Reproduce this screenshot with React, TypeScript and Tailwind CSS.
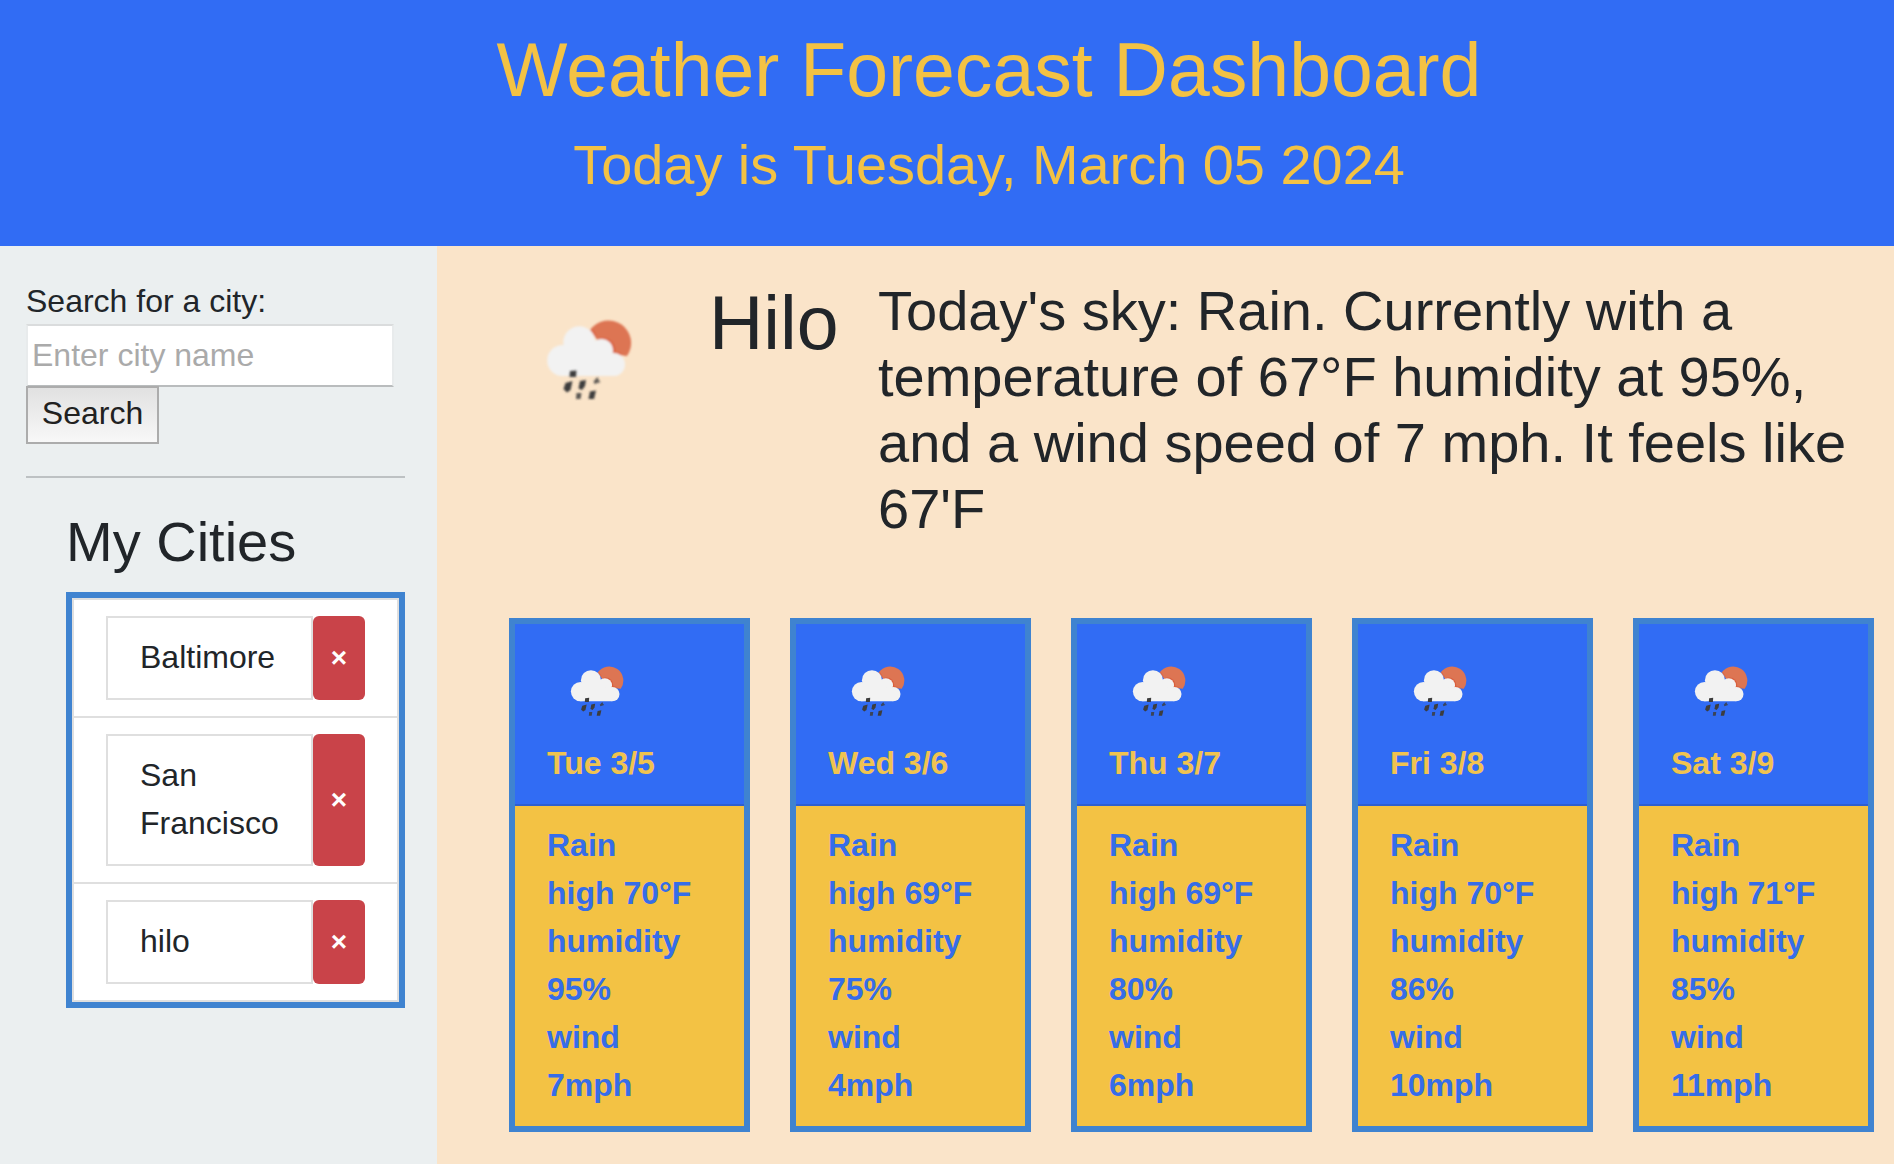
const cities = ["Baltimore", "San Francisco", "hilo"];

const forecast = [
  { day: "Tue 3/5", sky: "Rain", high: 70, humidity: 95, wind: 7 },
  { day: "Wed 3/6", sky: "Rain", high: 69, humidity: 75, wind: 4 },
  { day: "Thu 3/7", sky: "Rain", high: 69, humidity: 80, wind: 6 },
  { day: "Fri 3/8", sky: "Rain", high: 70, humidity: 86, wind: 10 },
  { day: "Sat 3/9", sky: "Rain", high: 71, humidity: 85, wind: 11 },
];

function RainIcon({ className }: { className: string }) {
  return (
    <svg viewBox="0 0 160 160" className={className} aria-label="Rain">
      <defs>
        <filter id="soft" x="-20%" y="-20%" width="140%" height="140%">
          <feGaussianBlur stdDeviation="0.8" />
        </filter>
        <filter id="softDrops" x="-20%" y="-20%" width="140%" height="140%">
          <feGaussianBlur stdDeviation="1.2" />
        </filter>
        <clipPath id="sun">
          <path d="M82 52 A22 22 0 1 1 118 77 L100 74 Z" />
        </clipPath>
      </defs>
      <g filter="url(#soft)">
        <path d="M81 52 A22 22 0 1 1 118 78 L98 76 Z" fill="#dd7453" />
        <g clipPath="url(#sun)" fill="#d8512f" opacity="0.6">
          <circle cx="72" cy="64" r="16.5" />
          <circle cx="94" cy="72" r="12" />
          <circle cx="106" cy="86" r="12" />
        </g>
        <g fill="#f2f2f2">
          <circle cx="53.7" cy="82.5" r="15.5" />
          <circle cx="70.3" cy="64.3" r="16" />
          <circle cx="92.5" cy="72.5" r="11.5" />
          <circle cx="104.5" cy="86.5" r="11.5" />
          <path d="M53 98 V70 H80 L104 80 V98 Z" />
        </g>
      </g>
      <g fill="#3c3c3c" filter="url(#softDrops)">
        <path d="M61 93 L67.500 92.500 L67 99 L60.500 99 Z" />
        <path d="M56.500 105 L63.500 103 L61.500 112 L58 114.500 L54.500 111 Z" />
        <path d="M71 103 L77 102 L76 108 L73 112 L69.500 110.500 Z" />
        <path d="M88.500 99 L90 102.500 L91.500 104 L85.500 106 L84.500 103.500 Z" opacity="0.8" />
        <path d="M67.500 115 L72.500 115 L71.500 121 L67 121 Z" opacity="0.85" />
        <path d="M81 113.500 L87 112.500 L85 121 L79.500 121 Z" />
      </g>
    </svg>
  );
}

function Header() {
  return (
    <header className="h-[246px] bg-[#316cf4] pt-6 pl-[84px] text-center text-[#f3c244]">
      <h1 className="text-[75.2px] leading-[92px]">Weather Forecast Dashboard</h1>
      <h2 className="mt-4 text-[55.9px] leading-[66px]">Today is Tuesday, March 05 2024</h2>
    </header>
  );
}

function Sidebar() {
  return (
    <aside className="w-[437px] shrink-0 bg-[#ebeff0] pt-[31px] pr-8 pl-[26px]">
      <label htmlFor="city" className="block h-[47px] leading-[48px]">Search for a city:</label>
      <input
        id="city"
        placeholder="Enter city name"
        className="block h-[63px] w-[368px] border-2 border-t-[#dadcdd] border-r-[#e8ebec] border-b-[#b9bcbd] border-l-[#e8ebec] bg-white px-1 outline-none placeholder:text-[#aaaaaa]"
      />
      <button className="-mt-px block h-[58px] w-[133px] border-2 border-[#acacac] bg-linear-to-b from-[#e1e1e1] to-[#f8f8f8] pb-1 text-center text-[#212121]">
        Search
      </button>
      <hr className="mt-8 border-t-2 border-[#bdc1c3]" />
      <div className="pl-10">
        <h3 className="mt-[31px] text-[56px] leading-[66px]">My Cities</h3>
        <ul className="mt-[17px] w-[339px] border-[6px] border-[#3f83d0] bg-white">
          {cities.map((city) => (
            <li key={city} className="flex border-2 border-b-0 border-[#dfdfdf] px-8 py-4 last:border-b-2">
              <span className="w-[207px] border-2 border-[#dfdfdf] px-8 pt-[15px] pb-[17px] leading-[48px]">{city}</span>
              <button className="w-[52px] rounded-md bg-[#c94349] text-[28px] font-bold text-white">×</button>
            </li>
          ))}
        </ul>
      </div>
    </aside>
  );
}

function Today() {
  return (
    <section className="flex h-[372px] pt-8 pl-[72px]">
      <RainIcon className="h-40 w-40 shrink-0" />
      <h2 className="ml-10 w-[169px] shrink-0 text-[75.2px] leading-[90px]">Hilo</h2>
      <p className="text-[56px] leading-[66px] whitespace-nowrap">
        Today's sky: Rain. Currently with a<br />
        temperature of 67°F humidity at 95%,<br />
        and a wind speed of 7 mph. It feels like<br />
        67'F
      </p>
    </section>
  );
}

function Forecast() {
  return (
    <section className="flex gap-10 pl-[72px]">
      {forecast.map((f) => (
        <article key={f.day} className="w-[241px] shrink-0 border-[6px] border-[#3f83d0] bg-[#f3c244] leading-[48px] font-bold">
          <div className="border-b-2 border-[#2e5fd0] bg-[#316cf4] px-8 pt-4 pb-[17px] text-[#f0c350]">
            <RainIcon className="-mb-px block h-[100px] w-[100px]" />
            <div>{f.day}</div>
          </div>
          <div className="px-8 pt-[15px] pb-[17px] text-[#366de8]">
            <div>{f.sky}</div>
            <div className="whitespace-nowrap">high {f.high}°F</div>
            <div>humidity</div>
            <div>{f.humidity}%</div>
            <div>wind</div>
            <div>{f.wind}mph</div>
          </div>
        </article>
      ))}
    </section>
  );
}

export default function App() {
  return (
    <div className="flex h-[1164px] w-[1894px] flex-col overflow-hidden font-['Liberation_Sans',Arial,sans-serif] text-[32px] text-[#212529]">
      <Header />
      <div className="flex flex-1">
        <Sidebar />
        <main className="flex-1 bg-[#fae4c9]">
          <Today />
          <Forecast />
        </main>
      </div>
    </div>
  );
}
